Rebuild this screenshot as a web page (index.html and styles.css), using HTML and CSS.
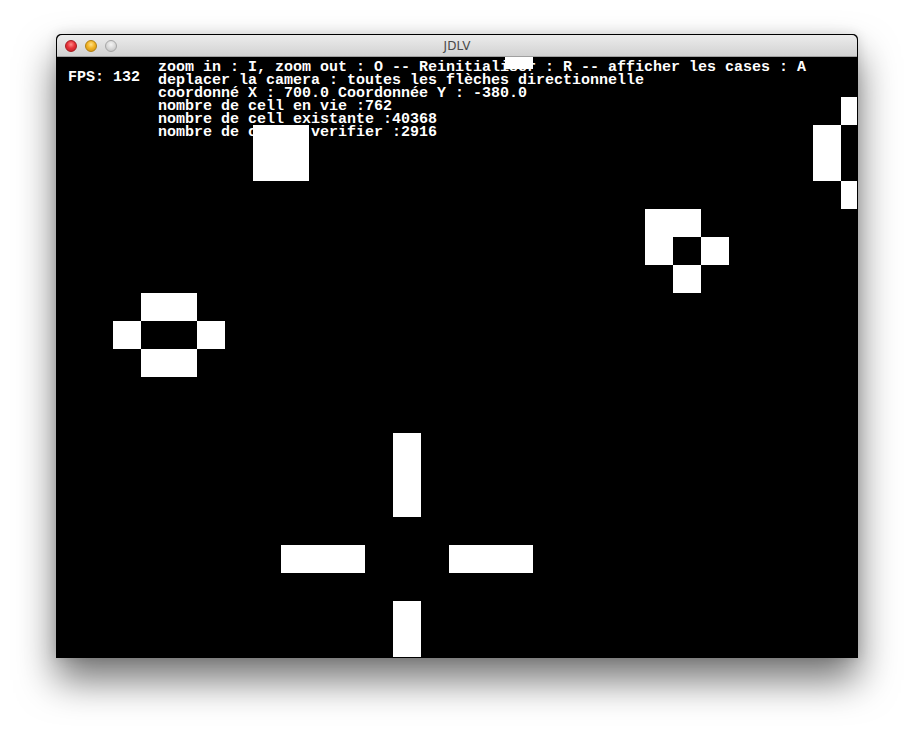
FILE: index.html
```html
<!DOCTYPE html>
<html>
<head>
<meta charset="utf-8">
<title>JDLV</title>
<link rel="stylesheet" href="styles.css">
</head>
<body>
<div class="desk">
  <div class="window">
    <div class="titlebar">
      <div class="lights">
        <span class="light red"></span>
        <span class="light yellow"></span>
        <span class="light gray"></span>
      </div>
      <div class="title">JDLV</div>
    </div>
    <div class="canvas">
      <div class="fps">FPS: 132</div>
      <div class="info">
        <div>zoom in : I, zoom out : O -- Reinitialiser : R -- afficher les cases : A</div>
        <div>deplacer la camera : toutes les flèches directionnelle</div>
        <div>coordonné X : 700.0 Coordonnée Y : -380.0</div>
        <div>nombre de cell en vie :762</div>
        <div>nombre de cell existante :40368</div>
        <div>nombre de cell a verifier :2916</div>
      </div>
      <div class="cells">
        <i class="cell" style="grid-area: 1 / 17 / span 1 / span 1"></i>
        <i class="cell" style="grid-area: 4 / 8 / span 2 / span 2"></i>
        <i class="cell" style="grid-area: 3 / 29 / span 1 / span 1"></i>
        <i class="cell" style="grid-area: 4 / 28 / span 2 / span 1"></i>
        <i class="cell" style="grid-area: 6 / 29 / span 1 / span 1"></i>
        <i class="cell" style="grid-area: 7 / 22 / span 1 / span 2"></i>
        <i class="cell" style="grid-area: 8 / 22 / span 1 / span 1"></i>
        <i class="cell" style="grid-area: 8 / 24 / span 1 / span 1"></i>
        <i class="cell" style="grid-area: 9 / 23 / span 1 / span 1"></i>
        <i class="cell" style="grid-area: 10 / 4 / span 1 / span 2"></i>
        <i class="cell" style="grid-area: 11 / 3 / span 1 / span 1"></i>
        <i class="cell" style="grid-area: 11 / 6 / span 1 / span 1"></i>
        <i class="cell" style="grid-area: 12 / 4 / span 1 / span 2"></i>
        <i class="cell" style="grid-area: 15 / 13 / span 3 / span 1"></i>
        <i class="cell" style="grid-area: 19 / 9 / span 1 / span 3"></i>
        <i class="cell" style="grid-area: 19 / 15 / span 1 / span 3"></i>
        <i class="cell" style="grid-area: 21 / 13 / span 2 / span 1"></i>
      </div>
    </div>
  </div>
</div>
</body>
</html>
```

FILE: styles.css
```css
html, body {
  margin: 0;
  padding: 0;
  background: #ffffff;
}

.desk {
  width: 914px;
  height: 736px;
  padding: 34px 0 0 56px;
  box-sizing: border-box;
  overflow: hidden;
}

.window {
  width: 800px;
  border: 1px solid rgba(0, 0, 0, 0.28);
  border-radius: 5px 5px 0 0;
  box-shadow: 0 22px 38px rgba(0, 0, 0, 0.55), 0 0 12px rgba(0, 0, 0, 0.12);
  background: #000;
}

.titlebar {
  position: relative;
  height: 22px;
  display: flex;
  align-items: center;
  justify-content: center;
  border-radius: 5px 5px 0 0;
  background: linear-gradient(#ececec, #d2d2d2);
  border-bottom: 1px solid #a0a0a0;
  box-sizing: border-box;
}

.lights {
  position: absolute;
  left: 8px;
  top: 5px;
  display: flex;
  gap: 8px;
}

.light {
  width: 12px;
  height: 12px;
  border-radius: 50%;
  box-sizing: border-box;
}

.light.red {
  background: radial-gradient(circle at 50% 35%, #ff8a87 0%, #e8323a 45%, #b81e22 100%);
  border: 1px solid #a51b1e;
}

.light.yellow {
  background: radial-gradient(circle at 50% 35%, #ffe28a 0%, #f3b425 45%, #c98c12 100%);
  border: 1px solid #b1800f;
}

.light.gray {
  background: radial-gradient(circle at 50% 35%, #f4f4f4 0%, #d6d6d6 55%, #b9b9b9 100%);
  border: 1px solid #a6a6a6;
}

.title {
  font-family: "DejaVu Sans", "Liberation Sans", sans-serif;
  font-size: 12px;
  color: #4a4a4a;
  padding-top: 1px;
  letter-spacing: 0.2px;
}

.canvas {
  position: relative;
  width: 800px;
  height: 600px;
  background: #000;
  overflow: hidden;
  display: flex;
  align-items: flex-start;
  font-family: "Liberation Mono", "Courier New", monospace;
  font-weight: bold;
  font-size: 15px;
  line-height: 13px;
  color: #ffffff;
  white-space: nowrap;
}

.fps {
  padding: 14px 0 0 11px;
  width: 90px;
  flex: none;
}

.info {
  padding-top: 4px;
}

.cells {
  position: absolute;
  left: 0;
  top: -16px;
  display: grid;
  grid-template-columns: repeat(29, 28px);
  grid-template-rows: repeat(22, 28px);
}

.cell {
  background: #ffffff;
}
```
